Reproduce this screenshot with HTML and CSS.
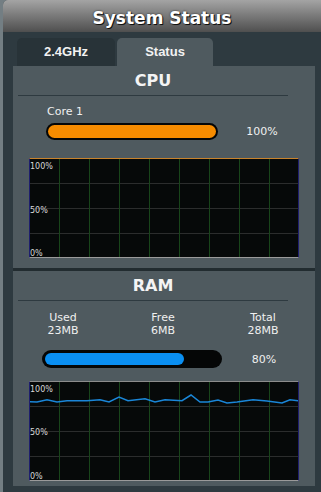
FILE: index.html
```html
<!DOCTYPE html>
<html lang="en">
<head>
    <meta charset="UTF-8">
    <meta name="viewport" content="width=device-width, initial-scale=1.0">
    <title>System Status</title>
    <link rel="stylesheet" href="styles.css">
</head>
<body>

<div class="frame">
    <div class="header">System Status</div>

    <div class="tabs">
        <div class="tab">2.4GHz</div>
        <div class="tab tab-active">Status</div>
    </div>

    <div class="panel">
        <!-- CPU -->
        <div class="section section-cpu">
            <div class="section-title">CPU</div>
            <div class="core-label">Core 1</div>
            <div class="bar-row bar-row-cpu">
                <div class="bar bar-cpu"><div class="bar-fill" style="width:100%"></div></div>
                <div class="pct">100%</div>
            </div>
            <div class="graph graph-cpu">
                <svg width="268" height="98" viewBox="0 0 268 98">
                    <g class="grid-h">
                        <line x1="0" y1="24.5" x2="268" y2="24.5"/>
                        <line x1="0" y1="49.5" x2="268" y2="49.5"/>
                        <line x1="0" y1="74.5" x2="268" y2="74.5"/>
                    </g>
                    <g class="grid-v">
                        <line x1="29.5" y1="0" x2="29.5" y2="98"/>
                        <line x1="59.5" y1="0" x2="59.5" y2="98"/>
                        <line x1="89.5" y1="0" x2="89.5" y2="98"/>
                        <line x1="119.5" y1="0" x2="119.5" y2="98"/>
                        <line x1="149.5" y1="0" x2="149.5" y2="98"/>
                        <line x1="179.5" y1="0" x2="179.5" y2="98"/>
                        <line x1="209.5" y1="0" x2="209.5" y2="98"/>
                        <line x1="239.5" y1="0" x2="239.5" y2="98"/>
                    </g>
                    <text class="axis" x="0" y="10">100%</text>
                    <text class="axis" x="0" y="54">50%</text>
                    <text class="axis" x="0" y="97">0%</text>
                </svg>
            </div>
        </div>

        <!-- RAM -->
        <div class="section section-ram">
            <div class="section-title">RAM</div>
            <div class="stats">
                <div class="stat"><div>Used</div><div>23MB</div></div>
                <div class="stat"><div>Free</div><div>6MB</div></div>
                <div class="stat"><div>Total</div><div>28MB</div></div>
            </div>
            <div class="bar-row bar-row-ram">
                <div class="bar bar-ram"><div class="bar-fill" style="width:80%"></div></div>
                <div class="pct">80%</div>
            </div>
            <div class="graph graph-ram">
                <svg width="268" height="98" viewBox="0 0 268 98">
                    <g class="grid-h">
                        <line x1="0" y1="24.5" x2="268" y2="24.5"/>
                        <line x1="0" y1="49.5" x2="268" y2="49.5"/>
                        <line x1="0" y1="74.5" x2="268" y2="74.5"/>
                    </g>
                    <g class="grid-v">
                        <line x1="29.5" y1="0" x2="29.5" y2="98"/>
                        <line x1="59.5" y1="0" x2="59.5" y2="98"/>
                        <line x1="89.5" y1="0" x2="89.5" y2="98"/>
                        <line x1="119.5" y1="0" x2="119.5" y2="98"/>
                        <line x1="149.5" y1="0" x2="149.5" y2="98"/>
                        <line x1="179.5" y1="0" x2="179.5" y2="98"/>
                        <line x1="209.5" y1="0" x2="209.5" y2="98"/>
                        <line x1="239.5" y1="0" x2="239.5" y2="98"/>
                    </g>
                    <polyline class="usage" points="0,19.7 7,20 17,17.7 27,20 37,18.7 57,18.7 70,17.7 79,20 89,15 98,18.7 115,16.7 125,20 135,17.7 152,18.7 161,13 170,20 178,20 188,18 197,21 207,20 223,17.7 237,19 252,21 260,17.7 268,18.7"/>
                    <text class="axis" x="0" y="10">100%</text>
                    <text class="axis" x="0" y="53">50%</text>
                    <text class="axis" x="0" y="97">0%</text>
                </svg>
            </div>
        </div>
    </div>
</div>

</body>
</html>
```

FILE: styles.css
```css
/* Page frame */
body {
    margin: 0;
    background-color: #737e83;
    font-family: "DejaVu Sans", Verdana, sans-serif;
    color: #f0f0f0;
}
.frame {
    margin-left: 3px;
    min-height: 492px;
    background-color: #2e3a40;
    border-top-left-radius: 5px;
}

/* Title bar */
.header {
    height: 32px;
    box-sizing: border-box;
    padding-top: 5px;
    line-height: 27px;
    text-align: center;
    font-size: 17px;
    font-weight: bold;
    color: #ffffff;
    text-shadow: 1px 1px 0 #111, 0 0 2px #222;
    background: linear-gradient(to bottom, #a4a4a4 0%, #7d7d7d 45%, #4f4f4f 100%);
    border-top-left-radius: 5px;
}

/* Tabs */
.tabs {
    display: flex;
    gap: 2px;
    padding-left: 14px;
    margin-top: 6px;
}
.tab {
    width: 98px;
    height: 28px;
    line-height: 28px;
    text-align: center;
    font-family: "Liberation Sans", Arial, sans-serif;
    font-size: 13px;
    font-weight: bold;
    color: #f2f2f2;
    background-color: #283338;
    border-radius: 5px 5px 0 0;
}
.tab-active {
    width: 96px;
    background-color: #4f5a5f;
}

/* Panel */
.panel {
    margin-left: 10px;
    width: 302px;
    background-color: #4f5a5f;
}
.section-cpu {
    padding-bottom: 10px;
}
.section-ram {
    border-top: 3px solid #222c30;
    padding-bottom: 5px;
}
.section-title {
    margin-left: 5px;
    width: 270px;
    padding: 5px 0 4px;
    line-height: 20px;
    text-align: center;
    font-size: 16px;
    font-weight: bold;
    color: #f4f4f4;
    border-bottom: 1px solid #2e3a40;
}
.core-label {
    margin-top: 9px;
    padding-left: 34px;
    font-size: 11px;
    line-height: 14px;
}

/* Stats row */
.stats {
    display: flex;
    margin-top: 10px;
}
.stat {
    width: 100px;
    text-align: center;
    font-size: 11px;
    line-height: 13px;
}

/* Progress bars */
.bar-row {
    display: flex;
    align-items: center;
}
.bar-row-cpu {
    margin-top: 4px;
    padding-left: 33px;
}
.bar-row-ram {
    margin-top: 13px;
    padding-left: 29px;
}
.bar {
    box-sizing: border-box;
    background-color: #050606;
}
.bar-cpu {
    width: 172px;
    height: 17px;
    padding: 2px;
    border-radius: 9px;
}
.bar-ram {
    width: 180px;
    height: 18px;
    padding: 3px;
    border-radius: 9px;
}
.bar-fill {
    height: 100%;
}
.bar-cpu .bar-fill {
    background-color: #f78c00;
    border-radius: 7px;
}
.bar-ram .bar-fill {
    background-color: #0a8ff2;
    border-radius: 6px;
}
.pct {
    width: 50px;
    text-align: center;
    font-size: 11px;
}
.bar-row-cpu .pct {
    margin-left: 19px;
}
.bar-row-ram .pct {
    margin-left: 17px;
}

/* Graphs */
.graph {
    margin-left: 16px;
    width: 270px;
    height: 100px;
    box-sizing: border-box;
    background-color: #060909;
    border-left: 1px solid #1e1e6e;
    border-right: 1px solid #1e1e6e;
    border-bottom: 1px solid #9a9a9a;
}
.graph svg {
    display: block;
}
.graph-cpu {
    margin-top: 18px;
    border-top: 1px solid #c8832c;
}
.graph-ram {
    margin-top: 13px;
    border-top: 1px solid #8c8c8c;
}
.grid-h line {
    stroke: #2b2d2d;
    stroke-width: 1;
}
.grid-v line {
    stroke: #18451a;
    stroke-width: 1;
}
.axis {
    font-family: "DejaVu Sans", Verdana, sans-serif;
    font-size: 8px;
    fill: #d8d8d8;
}
.usage {
    fill: none;
    stroke: #1a86d8;
    stroke-width: 1.5;
}
```
